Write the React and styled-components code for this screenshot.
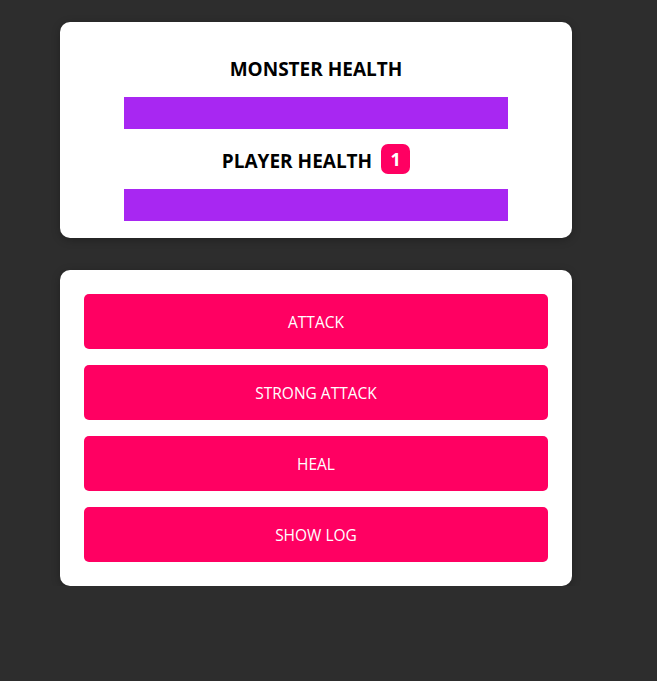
import styled, { createGlobalStyle } from 'styled-components';

const GlobalStyle = createGlobalStyle`
  * {
    box-sizing: border-box;
  }

  html, body {
    margin: 0;
    background: #2d2d2d;
    font-family: "Open Sans", "Noto Sans", sans-serif;
  }
`

function HealthBlock({ title, badge }){
  return (
    <Section>
      <Title>
        {title}
        {badge && <Badge>{badge}</Badge>}
      </Title>
      <Meter />
    </Section>
  )
}

function App(){
  const actions = ['ATTACK', 'STRONG ATTACK', 'HEAL', 'SHOW LOG'];

  return (
    <>
      <GlobalStyle />
      <Page>
        <Card $top>
          <HealthBlock title="MONSTER HEALTH" />
          <HealthBlock title="PLAYER HEALTH" badge="1" />
        </Card>

        <Card>
          <Controls>
            {
              actions.map(action => {
                return <Button key={action}>{action}</Button>
              })
            }
          </Controls>
        </Card>
      </Page>
    </>
  )
}

export default App;

const Page = styled.main`
  width: 512px;
  margin-left: 60px;
  padding-top: 22px;
  display: flex;
  flex-direction: column;
  gap: 32px;
`

const Card = styled.section`
  background: #fff;
  border-radius: 10px;
  box-shadow: 0 2px 8px rgba(0,0,0,0.26);
  padding: ${props => props.$top ? '30px 0 17px' : '24px'};
  display: flex;
  flex-direction: column;
  align-items: center;
  gap: 15px;
`

const Section = styled.div`
  width: 100%;
  display: flex;
  flex-direction: column;
  align-items: center;
  gap: 13px;
`

const Title = styled.h2`
  margin: 0;
  height: 32px;
  display: flex;
  align-items: center;
  justify-content: center;
  gap: 9px;
  font-size: 19px;
  font-weight: 700;
  color: #000;
  padding-top: 2px;
`

const Badge = styled.span`
  width: 29px;
  height: 30px;
  margin-top: -4px;
  border-radius: 7px;
  background: #ff0062;
  color: #fff;
  font-size: 18px;
  display: flex;
  align-items: center;
  justify-content: center;
`

const Meter = styled.div`
  width: 384px;
  height: 32px;
  background: #a827f2;
`

const Controls = styled.div`
  width: 100%;
  display: flex;
  flex-direction: column;
  gap: 16px;
`

const Button = styled.button`
  height: 55px;
  border: none;
  border-radius: 5px;
  background: #ff0062;
  color: #fff;
  font-family: "Open Sans", "Noto Sans", sans-serif;
  font-size: 15.5px;
  cursor: pointer;
`
